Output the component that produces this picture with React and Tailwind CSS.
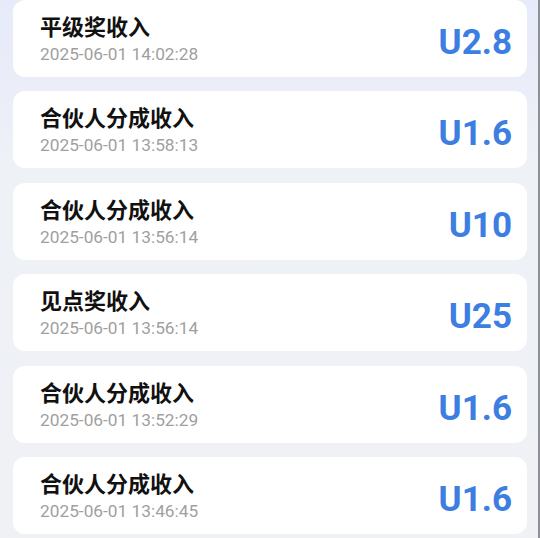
import React from "react";

const records = [
	{ title: "平级奖收入", time: "2025-06-01 14:02:28", amount: "U2.8" },
	{ title: "合伙人分成收入", time: "2025-06-01 13:58:13", amount: "U1.6" },
	{ title: "合伙人分成收入", time: "2025-06-01 13:56:14", amount: "U10" },
	{ title: "见点奖收入", time: "2025-06-01 13:56:14", amount: "U25" },
	{ title: "合伙人分成收入", time: "2025-06-01 13:52:29", amount: "U1.6" },
	{ title: "合伙人分成收入", time: "2025-06-01 13:46:45", amount: "U1.6" },
];

function RecordCard({ title, time, amount }) {
	return (
		<div className="flex h-[77px] shrink-0 items-center justify-between rounded-[12px] bg-white pl-[27px] pr-[15px]">
			<div className="flex flex-col">
				<p className="text-[22px] font-bold leading-[26px] text-[#111111] font-['Noto_Sans_CJK_SC',sans-serif]">
					{title}
				</p>
				<p className="mt-[5px] text-[17.3px] leading-[22px] text-[#9f9f9f] font-[Roboto,sans-serif]">
					{time}
				</p>
			</div>
			<p className="mt-[8px] text-[35px] font-bold leading-none text-[#3c7ee1] font-[Roboto,sans-serif]">
				{amount}
			</p>
		</div>
	);
}

export default function App() {
	return (
		<div className="flex h-[538px] w-[540px] overflow-hidden border-r-2 border-[#8d9097] bg-linear-to-b from-[#e7eaf9] via-[#eef1f6] via-30% to-[#eff1f5]">
			<div className="flex w-full flex-col gap-[14.4px] pl-[13px] pr-[11px] pt-0">
				{records.map((r, i) => (
					<RecordCard key={i} {...r} />
				))}
			</div>
		</div>
	);
}
